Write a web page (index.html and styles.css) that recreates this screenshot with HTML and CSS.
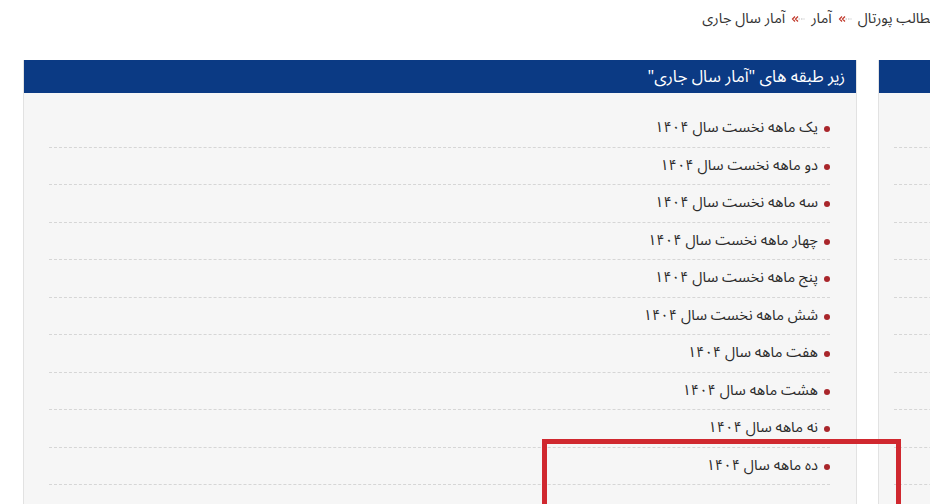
FILE: index.html
```html
<!DOCTYPE html>
<html lang="fa">
<head>
<meta charset="utf-8">
<title>آمار سال جاری</title>
<link rel="stylesheet" href="styles.css">
</head>
<body>
<div class="page">
  <div class="crumbs">
    <span class="crumb">مطالب پورتال</span>
    <span class="sep"><svg width="14" height="8" viewBox="0 0 14 8"><path d="M7.5 4h6" stroke="#bbb" stroke-width="1" stroke-dasharray="1.5 1"/><path d="M4 1.5L1.5 4 4 6.5M7 1.5L4.5 4 7 6.5" fill="none" stroke="#c0392b" stroke-width="1.2"/></svg></span>
    <span class="crumb">آمار</span>
    <span class="sep"><svg width="14" height="8" viewBox="0 0 14 8"><path d="M7.5 4h6" stroke="#bbb" stroke-width="1" stroke-dasharray="1.5 1"/><path d="M4 1.5L1.5 4 4 6.5M7 1.5L4.5 4 7 6.5" fill="none" stroke="#c0392b" stroke-width="1.2"/></svg></span>
    <span class="crumb">آمار سال جاری</span>
  </div>
  <div class="panels">
    <section class="panel main">
      <h2 class="panel-head">زیر طبقه های "آمار سال جاری"</h2>
      <ul class="list">
        <li>یک ماهه نخست سال ۱۴۰۴</li>
        <li>دو ماهه نخست سال ۱۴۰۴</li>
        <li>سه ماهه نخست سال ۱۴۰۴</li>
        <li>چهار ماهه نخست سال ۱۴۰۴</li>
        <li>پنج ماهه نخست سال ۱۴۰۴</li>
        <li>شش ماهه نخست سال ۱۴۰۴</li>
        <li>هفت ماهه سال ۱۴۰۴</li>
        <li>هشت ماهه سال ۱۴۰۴</li>
        <li>نه ماهه سال ۱۴۰۴</li>
        <li>ده ماهه سال ۱۴۰۴</li>
      </ul>
    </section>
    <section class="panel side">
      <h2 class="panel-head">&nbsp;</h2>
      <ul class="list plain">
        <li>&nbsp;</li><li>&nbsp;</li><li>&nbsp;</li><li>&nbsp;</li><li>&nbsp;</li>
        <li>&nbsp;</li><li>&nbsp;</li><li>&nbsp;</li><li>&nbsp;</li><li>&nbsp;</li>
      </ul>
    </section>
  </div>
  <div class="highlight"></div>
</div>
</body>
</html>
```
FILE: styles.css
```css
html, body {
  margin: 0;
  padding: 0;
  background: #fff;
  overflow: hidden;
}
body {
  font-family: "Noto Sans Arabic", "DejaVu Sans", "Liberation Sans", sans-serif;
  color: #333;
}
.page {
  position: relative;
  width: 930px;
  height: 504px;
  overflow: hidden;
}
.crumbs {
  width: 938px;
  height: 37px;
  box-sizing: border-box;
  direction: rtl;
  display: flex;
  align-items: center;
  gap: 6px;
  padding: 0;
  font-size: 14.5px;
  color: #333;
  white-space: nowrap;
}
.sep {
  display: inline-flex;
  align-items: center;
}
.panels {
  display: flex;
  gap: 21px;
  margin: 23px 0 0 23px;
  width: 1200px;
}
.panel {
  background: #f6f6f6;
  border-left: 1px solid #e2e2e2;
  border-right: 1px solid #e2e2e2;
  direction: rtl;
  height: 500px;
}
.main { width: 832px; }
.side { width: 300px; }
.panel-head {
  margin: 0;
  height: 33px;
  background: #0b3a84;
  color: #fff;
  font-size: 16.5px;
  font-weight: normal;
  line-height: 33px;
  padding: 0 11px 0 0;
}
.list {
  list-style: none;
  margin: 0;
  padding: 17px 26px 0 25px;
}
.side .list { padding: 17px 0 0 15px; }
.list li {
  height: 36.5px;
  line-height: 36.5px;
  border-bottom: 1px dashed #d6d6d6;
  font-size: 14.7px;
  color: #2b2b2b;
  padding-right: 12px;
  position: relative;
}
.main .list li::before {
  content: "";
  position: absolute;
  right: 0;
  top: 16px;
  width: 6px;
  height: 6px;
  border-radius: 50%;
  background: #a9262b;
}
.highlight {
  position: absolute;
  left: 542px;
  top: 439px;
  width: 349px;
  height: 120px;
  border: 5px solid #d0282f;
}
```
